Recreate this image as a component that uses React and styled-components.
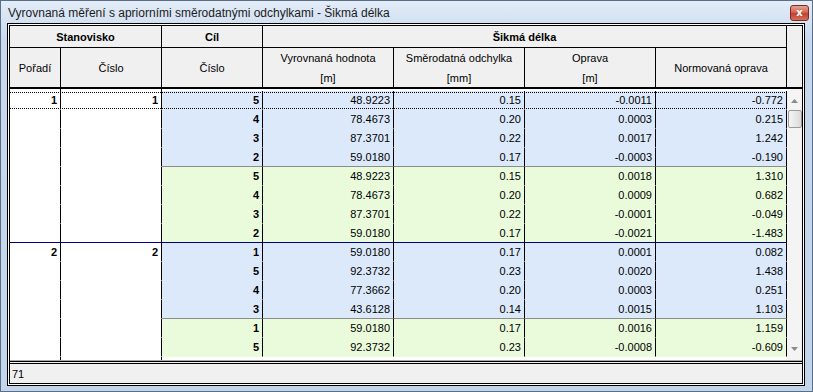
import React from "react";
import styled, { createGlobalStyle, css } from "styled-components";

const Global = createGlobalStyle`
  html, body { margin: 0; padding: 0; background: #ffffff; }
  body { font-family: "Liberation Sans", Arial, sans-serif; }
`;

const COLS = "51px 101px 101px 131px 131px 131px 131px";
const BLUE = "#dce9fb";
const GREEN = "#eafbdc";

const Window = styled.div`
  width: 813px;
  height: 392px;
  box-sizing: border-box;
  border: 1px solid #5b6e88;
  background: linear-gradient(#e4edf8 0px, #d3e1f2 22px, #c8d9ed 40px, #c3d5eb 100%);
  display: flex;
  flex-direction: column;
  padding: 0 7px 5px 6px;
`;

const TitleBar = styled.div`
  height: 22px;
  display: flex;
  align-items: center;
  justify-content: space-between;
  padding-left: 1px;
`;

const Title = styled.span`
  font-size: 12px;
  color: #1b1b1b;
  padding-top: 2px;
`;

const CloseBtn = styled.div`
  align-self: flex-start;
  width: 19px;
  height: 16px;
  box-sizing: border-box;
  margin-top: 4px;
  margin-right: -4px;
  border: 1px solid #7c2b22;
  border-radius: 3px;
  background: linear-gradient(#e7a292, #d26451 45%, #c1402e 55%, #d6705c);
  display: flex;
  align-items: center;
  justify-content: center;
  color: #ffffff;
  font: bold 10px "DejaVu Sans", sans-serif;
  line-height: 1;
`;

const Panel = styled.div`
  flex: 1;
  border: 3px double #000000;
  background: #ffffff;
  display: flex;
  flex-direction: column;
  min-height: 0;
`;

const GridArea = styled.div`
  flex: 1;
  display: flex;
  flex-direction: column;
  border-bottom: 1px solid #a9a9a9;
  min-height: 0;
`;

const Header = styled.div`
  display: grid;
  grid-template-columns: ${COLS} 1fr;
  grid-template-rows: 22px 41px;
  background: #f0f0f0;
`;

const HeadCell = styled.div`
  box-sizing: border-box;
  border-right: 1px solid #000000;
  border-bottom: ${(p) => (p.$last ? "2px" : "1px")} solid #000000;
  display: flex;
  flex-direction: column;
  align-items: center;
  justify-content: center;
  font-size: 11px;
  font-weight: ${(p) => (p.$bold ? 700 : 400)};
  color: #000000;
  line-height: 20px;
  grid-column: ${(p) => p.$col || "auto"};
  grid-row: ${(p) => p.$row || "auto"};
`;

const HeadSpacer = styled.div`
  grid-column: 8;
  grid-row: 1 / 3;
  border-bottom: 2px solid #000000;
`;

const Body = styled.div`
  flex: 1;
  display: flex;
  min-height: 0;
`;

const Rows = styled.div`
  width: 777px;
  padding-top: 2px;
  display: flex;
  flex-direction: column;
  background: linear-gradient(90deg, #fff 0 50px, #000 50px 51px, #fff 51px 151px, #000 151px 152px, transparent 152px);
`;

const Row = styled.div`
  position: relative;
  display: grid;
  grid-template-columns: ${COLS};
  height: 19px;
  ${(p) =>
    p.$focus &&
    css`
      &::after {
        content: "";
        position: absolute;
        left: 0;
        right: 0;
        top: 1px;
        bottom: 1px;
        border-top: 1px dotted #000;
        border-bottom: 1px dotted #000;
        pointer-events: none;
      }
    `}
`;

const Cell = styled.div`
  box-sizing: border-box;
  height: 19px;
  border-right: 1px solid #000000;
  border-bottom: 1px solid ${(p) => p.$line || "transparent"};
  background: ${(p) => p.$bg || "#ffffff"};
  padding-right: 3px;
  text-align: right;
  font-size: 11px;
  line-height: 19px;
  font-weight: ${(p) => (p.$bold ? 700 : 400)};
  color: #000000;
  white-space: nowrap;
`;

const Scrollbar = styled.div`
  flex: 1;
  display: flex;
  flex-direction: column;
  align-items: center;
  background: #f4f4f4;
`;

const Arrow = styled.div`
  height: 19px;
  width: 100%;
  display: flex;
  align-items: center;
  justify-content: center;
  padding-top: ${(p) => (p.$down ? "0" : "4px")};
  padding-bottom: ${(p) => (p.$down ? "3px" : "0")};
  box-sizing: border-box;
`;

const Thumb = styled.div`
  width: 14px;
  height: 18px;
  box-sizing: border-box;
  margin-top: 2px;
  border: 1px solid #9a9a9a;
  border-radius: 2px;
  background: linear-gradient(90deg, #f4f4f4, #e6e6e6 60%, #dadada);
`;

const Fill = styled.div`
  flex: 1;
`;

const StatusBar = styled.div`
  height: 22px;
  box-sizing: border-box;
  border-top: 3px double #000000;
  background: #f0f0f0;
  display: flex;
  align-items: center;
  padding-left: 2px;
  font-size: 11px;
  color: #000000;
`;

const ArrowIcon = ({ down }) => (
  <svg width="7" height="4" viewBox="0 0 7 4">
    {down ? <path d="M0 0 H7 L3.5 4 Z" fill="#8a8a8a" /> : <path d="M0 4 H7 L3.5 0 Z" fill="#8a8a8a" />}
  </svg>
);

const groups = [
  {
    por: 1,
    cis: 1,
    blue: [
      ["5", "48.9223", "0.15", "-0.0011", "-0.772"],
      ["4", "78.4673", "0.20", "0.0003", "0.215"],
      ["3", "87.3701", "0.22", "0.0017", "1.242"],
      ["2", "59.0180", "0.17", "-0.0003", "-0.190"],
    ],
    green: [
      ["5", "48.9223", "0.15", "0.0018", "1.310"],
      ["4", "78.4673", "0.20", "0.0009", "0.682"],
      ["3", "87.3701", "0.22", "-0.0001", "-0.049"],
      ["2", "59.0180", "0.17", "-0.0021", "-1.483"],
    ],
  },
  {
    por: 2,
    cis: 2,
    blue: [
      ["1", "59.0180", "0.17", "0.0001", "0.082"],
      ["5", "92.3732", "0.23", "0.0020", "1.438"],
      ["4", "77.3662", "0.20", "0.0003", "0.251"],
      ["3", "43.6128", "0.14", "0.0015", "1.103"],
    ],
    green: [
      ["1", "59.0180", "0.17", "0.0016", "1.159"],
      ["5", "92.3732", "0.23", "-0.0008", "-0.609"],
    ],
  },
];

const rows = [];
groups.forEach((g, gi) => {
  const all = [
    ...g.blue.map((r, i) => ({ r, bg: BLUE, subEnd: i === g.blue.length - 1 })),
    ...g.green.map((r) => ({ r, bg: GREEN, subEnd: false })),
  ];
  all.forEach((item, i) => {
    const groupEnd = i === all.length - 1 && gi < groups.length - 1;
    rows.push({
      ...item,
      por: i === 0 ? g.por : "",
      cis: i === 0 ? g.cis : "",
      groupEnd,
    });
  });
});

export default function App() {
  return (
    <>
      <Global />
      <Window>
        <TitleBar>
          <Title>Vyrovnaná měření s apriorními směrodatnými odchylkami - Šikmá délka</Title>
          <CloseBtn>x</CloseBtn>
        </TitleBar>
        <Panel>
          <GridArea>
            <Header>
              <HeadCell $bold $col="1 / 3" $row="1">Stanovisko</HeadCell>
              <HeadCell $bold $col="3" $row="1">Cíl</HeadCell>
              <HeadCell $bold $col="4 / 8" $row="1">Šikmá délka</HeadCell>
              <HeadSpacer />
              <HeadCell $last>Pořadí</HeadCell>
              <HeadCell $last>Číslo</HeadCell>
              <HeadCell $last>Číslo</HeadCell>
              <HeadCell $last><span>Vyrovnaná hodnota</span><span>[m]</span></HeadCell>
              <HeadCell $last><span>Směrodatná odchylka</span><span>[mm]</span></HeadCell>
              <HeadCell $last><span>Oprava</span><span>[m]</span></HeadCell>
              <HeadCell $last>Normovaná oprava</HeadCell>
            </Header>
            <Body>
              <Rows>
                {rows.map((row, i) => {
                  const leftLine = row.groupEnd ? "#000080" : undefined;
                  const rightLine = row.groupEnd ? "#000080" : row.subEnd ? "#8c8c8c" : undefined;
                  return (
                    <Row key={i} $focus={i === 0}>
                      <Cell $bold $line={leftLine}>{row.por}</Cell>
                      <Cell $bold $line={leftLine}>{row.cis}</Cell>
                      <Cell $bold $bg={row.bg} $line={rightLine}>{row.r[0]}</Cell>
                      <Cell $bg={row.bg} $line={rightLine}>{row.r[1]}</Cell>
                      <Cell $bg={row.bg} $line={rightLine}>{row.r[2]}</Cell>
                      <Cell $bg={row.bg} $line={rightLine}>{row.r[3]}</Cell>
                      <Cell $bg={row.bg} $line={rightLine}>{row.r[4]}</Cell>
                    </Row>
                  );
                })}
              </Rows>
              <Scrollbar>
                <Arrow><ArrowIcon /></Arrow>
                <Thumb />
                <Fill />
                <Arrow $down><ArrowIcon down /></Arrow>
              </Scrollbar>
            </Body>
          </GridArea>
          <StatusBar>71</StatusBar>
        </Panel>
      </Window>
    </>
  );
}
